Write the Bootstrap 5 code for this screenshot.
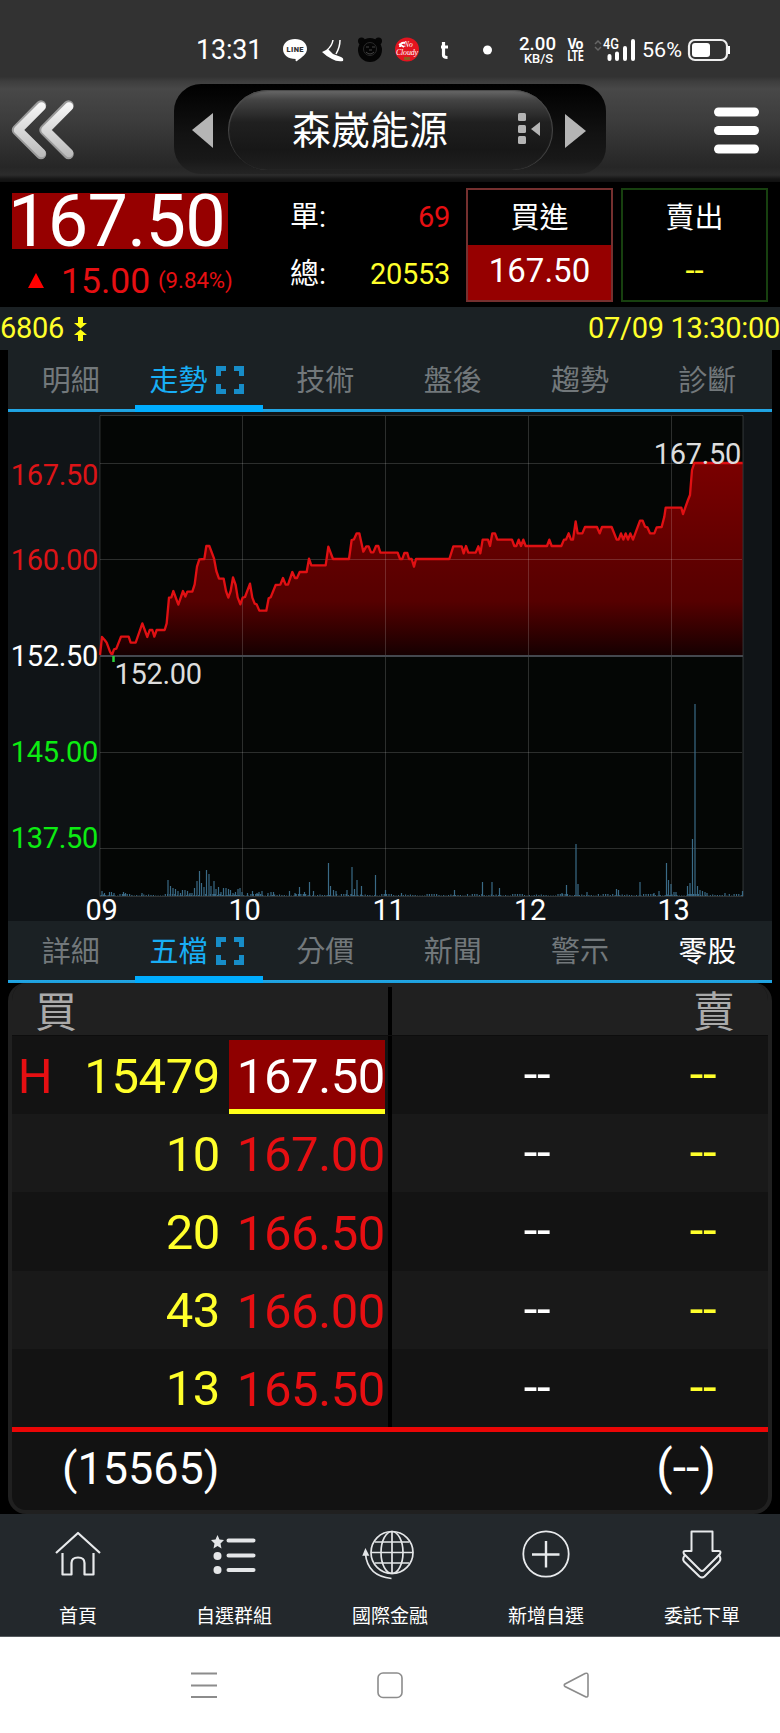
<!DOCTYPE html>
<html lang="zh-Hant">
<head>
<meta charset="utf-8">
<meta name="viewport" content="width=device-width, initial-scale=1">
<title>森崴能源 6806</title>
<link href="https://cdn.jsdelivr.net/npm/bootstrap@5.3.0/dist/css/bootstrap.min.css" rel="stylesheet">
<style>
body{background:#000;color:#fff;font-family:Roboto,"Noto Sans CJK TC",sans-serif;line-height:1;font-size:29px;width:780px;overflow-x:hidden}
svg{display:block;flex:none;overflow:visible}
.num{font-size:29px;letter-spacing:-.3px}
.c-red{color:#e60f12}.c-yel{color:#ffff2b}
.statusbar{height:77px;background:#323232;padding:22px 50px 0 196px}
.statusbar .clock{font-size:27px;letter-spacing:-.2px;width:87px}
.topbar{height:105px;background:linear-gradient(#333 0,#3d3d3d 4px,#484848 12px,#3c3c3c 45px,#262626 90px,#2c2c2c 98px,#161616 102px,#101010);padding:7px 20px 0 10px}
.capsule{width:432px;height:90px;border-radius:27px;background:linear-gradient(#000,#121212 50px,#181818 75px,#242424);margin-left:98px;padding:6px 18px 0}
.pill{width:325px;height:80px;border-radius:40px;background:linear-gradient(#6a6a6a 0,#444 10px,#202020 32px,#171717 60px,#202020 80px);box-shadow:inset 1px 1px 1px #4a4a4a,inset -1px 0 1px #4a4a4a;padding:0 12px 0 64px;margin-left:15px}
.pill h1{font-size:39px;margin:3px 0 0;line-height:1}
.quote{height:125px;padding-left:12px}
.bigprice{width:216px;height:56px;background:#960000;font-size:72px;letter-spacing:-.7px;line-height:56px;margin-top:11px;text-indent:-4px;padding-top:1px;white-space:nowrap}
.sum{width:160px;padding-right:0}
.trade{width:147px;height:114px;border:2px solid #75302f;margin-top:6px}
.trade.sell{border-color:#17400f}
.trade .lbl{height:55px;padding-top:1px}
.trade .val{flex:1;font-size:33px;padding-bottom:4px}
.codebar{height:43px;background:#1b2124}
.sheet{margin:0 8px;background:#101417}
.tabs{height:62px;background:#1b2124;background-image:linear-gradient(#25a7e5,#1b9fdd);background-size:100% 3px;background-position:0 59px;background-repeat:no-repeat;color:#72787b}
.tabs>div{flex:none;width:16.6667%;height:62px;padding:7px 2px 0 0;border-bottom:7px solid transparent}
.tabs>.on{color:#18aef5;border-color:#00adff;padding-right:5px}
.tabs svg{margin-left:8px;margin-top:-2px}
.panel{height:531px;border:4px solid #202020;border-top:0;border-radius:18px;background:#121212}
.book{height:444px}
.bhead{height:53px;background:#202020;color:#aaa;font-size:42px;padding:9px 33px 0 23px;border-bottom:1px solid #0d0d0d}
.brow{height:78.2px;font-size:49px;letter-spacing:-.4px;background:#131313;padding-top:2px}
.brow:nth-child(odd){background:#191919}
.c-h{width:46px;text-align:center}.c-q{width:162px;text-align:right}.c-p{width:156px;height:74px;margin-left:9px;text-align:right;padding-right:0;align-self:flex-end;padding-top:12px}
.hit{background:#8f0000;border-bottom:5px solid #ffff19;color:#fff}
.split{width:4px;background:#000;align-self:stretch;margin:-2px 0 0 3px}
.c-a{width:290px;text-align:center;padding-bottom:3px}.c-b{width:42px;text-align:center;padding-bottom:3px}
.total{height:80px;border-top:5px solid #eb0606;padding:0 52px 3px 50px;font-size:45px}
.bottom{height:123px;background:#23282c;font-size:19px;border-bottom:1px solid #555a5e}
.bottom>div{flex:1 1 0;padding-top:14px}
.bottom span{margin-top:auto;padding-bottom:10px}
.sysnav{height:96px;background:#fff;padding:0 190px}
</style>
</head>
<body>
<header class="statusbar">
 <div class="d-flex align-items-center" style="height:56px">
  <span class="clock">13:31</span>
  <svg width="447" height="56" viewBox="283 22 447 56" fill="#fff" font-family="Roboto">
   <path d="M295 39c7 0 12 4 12 10 0 5-5 8-10 12-1 .6-2-.4-1.300-2C288 59 283 55 283 49c0-6 5-10 12-10z"/>
   <text x="286.500" y="52" font-size="7.500" font-weight="900" fill="#323232" textLength="17">LINE</text>
   <path d="M322 52l6-3 5 5 8 3q3 1 2 4-6 1-11-2-6-3-10-7z"/><path d="M333 40q-1 6-6 10M340 40q0 7-4 14" fill="none" stroke="#fff" stroke-width="1.500"/>
   <g fill="#050505"><circle cx="370" cy="50" r="12"/><circle cx="361.500" cy="41" r="3.500"/><circle cx="378.500" cy="41" r="3.500"/></g>
   <path d="M366 47h3M372 47h3M366 52q4 4 8 0M369 50h3" stroke="#444" fill="none"/><circle cx="370" cy="49" r="6.500" stroke="#2a2a2a" fill="none"/>
   <circle cx="407" cy="49.500" r="12" fill="#e3141f"/><text x="404" y="46.500" font-size="7.500" font-style="italic" font-family="Liberation Serif">No</text><text x="396" y="55" font-size="8" font-style="italic" font-family="Liberation Serif" textLength="22">Cloudy</text>
   <path d="M400 47q0-5 5-4M399 44l5 3" stroke="#fff" stroke-width="2" fill="none"/><rect x="404" y="57" width="6" height="3" fill="#925a20"/>
   <path d="M443.500 42v13q0 2.500 4 2.500M441 47h7" stroke="#fff" stroke-width="3.200" fill="none"/>
   <circle cx="487.500" cy="50" r="4.500"/>
   <g font-weight="500"><text x="519" y="50" font-size="17.500" textLength="37" lengthAdjust="spacingAndGlyphs">2.00</text><text x="524" y="62.500" font-size="13.500" textLength="29" lengthAdjust="spacingAndGlyphs">KB/S</text>
   <text x="567.500" y="49" font-size="14" font-weight="700" textLength="16">Vo</text><text x="567.500" y="61" font-size="14.500" font-weight="700" textLength="16" lengthAdjust="spacingAndGlyphs">LTE</text>
   <text x="603" y="49" font-size="14.500" textLength="16" lengthAdjust="spacingAndGlyphs">4G</text></g>
   <path d="M595 44l3-3 3 3M595 47l3 3 3-3" stroke="#666" fill="none" stroke-width="1.500"/>
   <path d="M609.500 56v3M617 53.500v5.500M625 48v11M633 41v18" stroke="#fff" stroke-width="4" stroke-linecap="round" fill="none"/>
   <text x="642" y="56.500" font-size="21" textLength="40" lengthAdjust="spacingAndGlyphs">56%</text>
   <rect x="689" y="40" width="38" height="20" rx="6" fill="none" stroke="#eee" stroke-width="2.200"/><rect x="692" y="43" width="18" height="14" rx="3"/><path d="M729 46v8" stroke="#fff" stroke-width="2"/>
  </svg>
 </div>
</header>

<nav class="topbar d-flex">
 <svg width="66" height="90" viewBox="10 84 66 90"><defs><linearGradient id="sil" gradientUnits="userSpaceOnUse" x1="0" y1="102" x2="0" y2="158"><stop offset="0" stop-color="#fafafa"/><stop offset="1" stop-color="#b8b8b8"/></linearGradient></defs>
  <g fill="none" stroke-linejoin="round" stroke-linecap="round"><path d="M41 105.500L17 130l24 24M68.500 105.500L44.500 130l24 24" stroke="#9a9a9a" stroke-width="10.500"/><path d="M41.500 106.500L18 130l23.500 23M69 106.500L45.500 130l23.500 23" stroke="url(#sil)" stroke-width="8.500"/></g></svg>
 <div class="capsule d-flex">
  <svg width="21" height="80" viewBox="0 0 21 80"><path d="M0 40L21 23v35z" fill="#b5b5b5"/></svg>
  <div class="pill d-flex align-items-center justify-content-between">
   <h1 class="fw-normal">森崴能源</h1>
   <svg width="24" height="34" viewBox="0 1 24 34" fill="#b4b4b4"><rect x="1" y="1" width="8" height="8" rx="1.500"/><rect x="1" y="13" width="8" height="8" rx="1.500"/><rect x="1" y="24" width="8" height="8" rx="1.500"/><path d="M14 17l9-7v14z"/></svg>
  </div>
  <svg style="margin-left:12px" width="21" height="80" viewBox="0 0 21 80"><path d="M21 41L0 24v34z" fill="#b5b5b5"/></svg>
 </div>
 <svg class="ms-auto" width="46" height="90" viewBox="0 0 46 90" fill="#fff"><rect y="23.500" width="45" height="9" rx="4.500"/><rect y="42" width="45" height="9" rx="4.500"/><rect y="60.500" width="45" height="9" rx="4.500"/></svg>
</nav>

<section class="quote d-flex">
 <div style="width:278px">
  <div class="bigprice">167.50</div>
  <div class="d-flex align-items-center c-red" style="height:62px;padding-top:3px">
   <svg width="49" height="20" viewBox="0 0 49 20"><path d="M16 16L24 1l8 15z" fill="red"/></svg>
   <span style="font-size:35.500px;width:97px;padding-top:1px">15.00</span><small style="font-size:22.200px;margin-top:-3px">(9.84%)</small>
  </div>
 </div>
 <div class="sum">
  <div class="d-flex justify-content-between align-items-center" style="height:69px;padding-top:2px"><span>單:</span><span class="c-red num">69</span></div>
  <div class="d-flex justify-content-between align-items-center" style="height:43px;padding-top:3px"><span>總:</span><span class="c-yel num">20553</span></div>
 </div>
 <div class="trade d-flex flex-column" style="margin-left:16px"><div class="lbl d-flex align-items-center justify-content-center">買進</div><div class="val d-flex align-items-center justify-content-center" style="background:#960000">167.50</div></div>
 <div class="trade sell d-flex flex-column" style="margin-left:8px"><div class="lbl d-flex align-items-center justify-content-center">賣出</div><div class="val d-flex align-items-center justify-content-center c-yel" style="padding-bottom:5px">--</div></div>
</section>

<div class="codebar d-flex justify-content-between align-items-center c-yel num">
 <div class="d-flex align-items-center">6806<svg style="margin-left:10px" width="14" height="26" viewBox="0 0 14 26" fill="#ffff14"><path d="M4 1h5v6h4L6.500 12.500 0 7h4zM4 25h5v-6h4l-6.500-5.500L0 19h4z"/></svg></div>
 <span>07/09 13:30:00</span>
</div>

<main class="sheet">
 <div class="tabs d-flex text-center">
  <div class="d-flex align-items-center justify-content-center">明細</div>
  <div class="on d-flex align-items-center justify-content-center">走勢<svg width="28" height="28" viewBox="0 0 28 28"><path d="M2.500 10V2.500H10M18 2.500h7.500V10M25.500 18v7.500H18M10 25.500H2.500V18" fill="none" stroke="#178dc8" stroke-width="5"/></svg></div>
  <div class="d-flex align-items-center justify-content-center">技術</div>
  <div class="d-flex align-items-center justify-content-center">盤後</div>
  <div class="d-flex align-items-center justify-content-center">趨勢</div>
  <div class="d-flex align-items-center justify-content-center">診斷</div>
 </div>
 <svg width="764" height="509" viewBox="8 412 764 509" font-family="Roboto" font-size="29" letter-spacing="-.3">
  <defs><linearGradient id="fall" gradientUnits="userSpaceOnUse" x1="0" y1="159" x2="0" y2="735"><stop offset="0" stop-color="#7a0000"/><stop offset=".5" stop-color="#600000"/><stop offset=".72" stop-color="#560000"/><stop offset="1" stop-color="#160001"/></linearGradient></defs>
  <rect x="100" y="415.500" width="642.700" height="481" fill="#040605"/>
  <g transform="translate(0 410) scale(.33333)"><path id="area" fill="url(#fall)"/></g>
  <path d="M100 415.500H743V896.500H100zM242.500 416v480M385.500 416v480M528.500 416v480M671.500 416v480M100 463.500h642M100 559.500h642M100 752.500h642M100 848.500h642" fill="none" stroke="#fff" stroke-opacity=".16"/>
  <g transform="translate(0 410) scale(.33333)"><path id="line" fill="none" stroke="#e01013" stroke-width="7" stroke-linejoin="round"/></g>
  <path d="M100 656h643" stroke="#44484f" stroke-width="2"/><path d="M113.500 656v6" stroke="#2bd03a" stroke-width="2.500"/>
  <path id="vol" stroke="#3a6a86" stroke-width="1.200"/>
  <g text-anchor="end"><g fill="#dc1417"><text x="98" y="484.500">167.50</text><text x="98" y="569.500">160.00</text></g><text x="98" y="665.500" fill="#fff">152.50</text><g fill="#0cec12"><text x="98" y="762">145.00</text><text x="98" y="847.500">137.50</text></g><text x="741" y="463.500" fill="#ddd">167.50</text></g>
  <text x="114.500" y="683.500" fill="#ddd">152.00</text>
  <g fill="#fff" text-anchor="middle"><text x="101.500" y="920">09</text><text x="244.500" y="920">10</text><text x="388.500" y="920">11</text><text x="530" y="920">12</text><text x="673.500" y="920">13</text></g>
 </svg>
 <div class="tabs d-flex text-center">
  <div class="d-flex align-items-center justify-content-center">詳細</div>
  <div class="on d-flex align-items-center justify-content-center">五檔<svg width="28" height="28" viewBox="0 0 28 28"><path d="M2.500 10V2.500H10M18 2.500h7.500V10M25.500 18v7.500H18M10 25.500H2.500V18" fill="none" stroke="#178dc8" stroke-width="5"/></svg></div>
  <div class="d-flex align-items-center justify-content-center">分價</div>
  <div class="d-flex align-items-center justify-content-center">新聞</div>
  <div class="d-flex align-items-center justify-content-center">警示</div>
  <div class="d-flex align-items-center justify-content-center text-white">零股</div>
 </div>
 <div class="bg-black"><div class="panel overflow-hidden">
  <div class="book">
   <div class="bhead d-flex"><span>買</span><div class="split" style="margin:-5px auto 0 311px"></div><span>賣</span></div>
   <div class="brow d-flex align-items-center"><span class="c-h c-red">H</span><span class="c-q c-yel">15479</span><span class="c-p hit">167.50</span><span class="split"></span><span class="c-a">--</span><span class="c-b c-yel">--</span></div>
   <div class="brow d-flex align-items-center"><span class="c-h"></span><span class="c-q c-yel">10</span><span class="c-p c-red">167.00</span><span class="split"></span><span class="c-a">--</span><span class="c-b c-yel">--</span></div>
   <div class="brow d-flex align-items-center"><span class="c-h"></span><span class="c-q c-yel">20</span><span class="c-p c-red">166.50</span><span class="split"></span><span class="c-a">--</span><span class="c-b c-yel">--</span></div>
   <div class="brow d-flex align-items-center"><span class="c-h"></span><span class="c-q c-yel">43</span><span class="c-p c-red">166.00</span><span class="split"></span><span class="c-a">--</span><span class="c-b c-yel">--</span></div>
   <div class="brow d-flex align-items-center"><span class="c-h"></span><span class="c-q c-yel">13</span><span class="c-p c-red">165.50</span><span class="split"></span><span class="c-a">--</span><span class="c-b c-yel">--</span></div>
  </div>
  <div class="total d-flex justify-content-between align-items-center"><span>(15565)</span><span style="font-size:48px">(--)</span></div>
 </div></div>
</main>

<nav class="bottom d-flex text-center">
 <div class="d-flex flex-column align-items-center"><svg width="52" height="52" viewBox="52 1528 52 52" fill="none" stroke="#e8eaec" stroke-width="2.200" stroke-linejoin="round"><path d="M56 1553l22-20 22 20M62.500 1553v21.500h9V1563q0-5.500 6.500-5.500t6.500 5.500v11.500h9V1553"/></svg><span>首頁</span></div>
 <div class="d-flex flex-column align-items-center"><svg width="52" height="52" viewBox="208 1528 52 52" fill="#e4e6e8"><path d="M217.500 1535l2 4.500 4.500.5-3.500 3.500 1 5-4-2.500-4 2.500 1-5-3.500-3.500 4.500-.5z"/><circle cx="217.500" cy="1556" r="4"/><circle cx="217.500" cy="1570" r="4"/><path d="M228.500 1540.500h25M228.500 1555.500h25M228.500 1570h25" stroke="#e4e6e8" stroke-width="4" stroke-linecap="round"/></svg><span>自選群組</span></div>
 <div class="d-flex flex-column align-items-center"><svg width="52" height="52" viewBox="364 1528 52 52" fill="none" stroke="#e4e6e8" stroke-width="1.700"><circle cx="392" cy="1552.500" r="21"/><ellipse cx="392" cy="1552.500" rx="11" ry="21"/><path d="M392 1531.500v42M371 1552.500h42M375 1542h34M375 1563h34M365.500 1554q2 22 26 24.500"/><path d="M363.500 1555l2-5 2.500 5z" fill="#e4e6e8"/></svg><span>國際金融</span></div>
 <div class="d-flex flex-column align-items-center"><svg width="52" height="52" viewBox="520 1528 52 52" fill="none" stroke="#e8eaec" stroke-width="1.800"><circle cx="546" cy="1554" r="22.700"/><path d="M546 1541v26.500M532 1554.500h27.500" stroke-width="2.400"/></svg><span>新增自選</span></div>
 <div class="d-flex flex-column align-items-center"><svg width="52" height="52" viewBox="676 1528 52 52" fill="none" stroke="#e8eaec" stroke-width="2" stroke-linejoin="round"><path d="M691.500 1531.500h21V1551h6q3 0 1.500 3l-16 16q-2 2-4 0l-16-16q-1.500-3 1.500-3h6z"/><path d="M685 1555q-3 4-1 6.500l15.500 15q2.500 2 5 0l15-15q2-2.500-.5-6.500"/></svg><span>委託下單</span></div>
</nav>
<footer class="sysnav d-flex justify-content-between align-items-center">
 <svg width="28" height="28" viewBox="0 0 28 28" stroke="#8c8c8c" stroke-width="2"><path d="M1 2.500h26M1 14.500h26M1 26h26"/></svg>
 <svg width="28" height="28" viewBox="0 0 28 28"><rect x="2" y="2" width="24" height="24.500" rx="5" fill="none" stroke="#8c8c8c" stroke-width="1.600"/></svg>
 <svg width="28" height="28" viewBox="0 0 28 28"><path d="M3 13L23 2.500q3-1 3 1.500v20q0 3-3 1.500L3 15.500Q1.500 14 3 13z" fill="none" stroke="#8c8c8c" stroke-width="1.600"/></svg>
</footer>

<script src="https://cdn.jsdelivr.net/npm/bootstrap@5.3.0/dist/js/bootstrap.bundle.min.js"></script>
<script>
// Intraday price trace
const p="300,735 306,681 314,690 320,698 330,725 336,735 342,718 349,716 363,680 386,680 392,698 407,698 427,640 442,681 449,660 457,660 463,680 470,660 494,660 500,640 507,563 514,562 520,543 535,584 549,543 556,560 562,545 577,545 584,523 591,470 598,448 613,447 619,408 628,408 642,445 649,483 657,506 671,506 678,543 685,563 692,543 699,502 707,525 713,562 721,583 728,563 735,561 750,521 757,563 764,581 770,583 778,602 799,602 806,565 812,562 827,525 841,524 849,504 857,524 864,524 877,486 885,504 891,504 899,486 920,486 927,446 934,466 977,466 985,410 999,447 1047,447 1055,390 1062,388 1070,370 1078,370 1090,425 1099,409 1106,409 1113,427 1120,427 1128,408 1135,408 1141,428 1193,428 1200,447 1207,447 1213,429 1222,429 1227,447 1235,447 1242,470 1248,447 1348,447 1360,409 1385,409 1391,430 1398,408 1405,428 1427,428 1435,409 1441,430 1448,389 1464,389 1470,408 1477,370 1485,370 1492,389 1536,389 1543,408 1549,408 1556,389 1563,408 1570,389 1577,408 1641,408 1648,389 1655,408 1684,408 1692,389 1698,389 1706,370 1713,389 1719,389 1727,334 1733,370 1747,370 1755,351 1791,351 1799,370 1806,351 1835,351 1850,389 1856,389 1863,370 1870,389 1877,370 1884,389 1891,370 1899,389 1920,332 1928,332 1935,350 1942,352 1950,370 1963,370 1970,352 1985,351 1993,320 1997,293 2044,293 2049,312 2064,270 2070,255 2076,180 2083,159 2228,159";
document.getElementById('line').setAttribute('d','M'+p.replaceAll(' ','L'));
document.getElementById('area').setAttribute('d','M'+p.replaceAll(' ','L')+'L2228,735L300,735Z');
// Volume bars: x position, height
const v="102,5 104.5,3 109.5,4 111.5,4 114,3 123.5,4 125.5,3 142,3 168,16 170.5,10 173,8 175.5,7 178,5 180.5,3 182.5,6 185,6 187.5,5 190,3 192,3 194.5,8 197,15 199.5,25 201.5,13 204,9 206.5,26 209,22 211,10 214,15 216,7 218.5,9 221,4 223.5,8 226,8 228.5,7 230.500,6 233,3 235.5,4 238,7 240,8 242,4 247.5,3 252.5,5 257,3 259,4 262,5 268,3 271,4 273.5,4 289.5,5 295,3 299.5,9 304.5,4 309.5,14 313.5,5 328.5,33 330.5,10 333.5,6 336,5 347,6 352,29 354.5,7 357,16 361.5,10 375.5,21 385.5,6 401.5,3 454.5,6 482.5,14 492,14 499.5,8 562,3 566.5,11 576,52 578,12 587,4 616.5,7 618.5,6 640,14 654,3 659,5 666.5,33 668.5,16 671,12 674,4 676,4 687.5,10 690,13 692.5,57 695,192 697.5,10 700,6 702.5,5 705,4 707,3 725,3 742.500,5".split(' ');
let d=v.map(s=>{const[x,h]=s.split(',');return`M${x} 896v-${h}`}).join('');
for(let i=0;i<270;i++)d+=`M${(101+i*2.38).toFixed(1)} 896v-${[1,2,1,.5,2,1,1,.5,1.500,2,.5][(i*7+i%5)%11]}`;
document.getElementById('vol').setAttribute('d',d);
</script>
</body>
</html>
